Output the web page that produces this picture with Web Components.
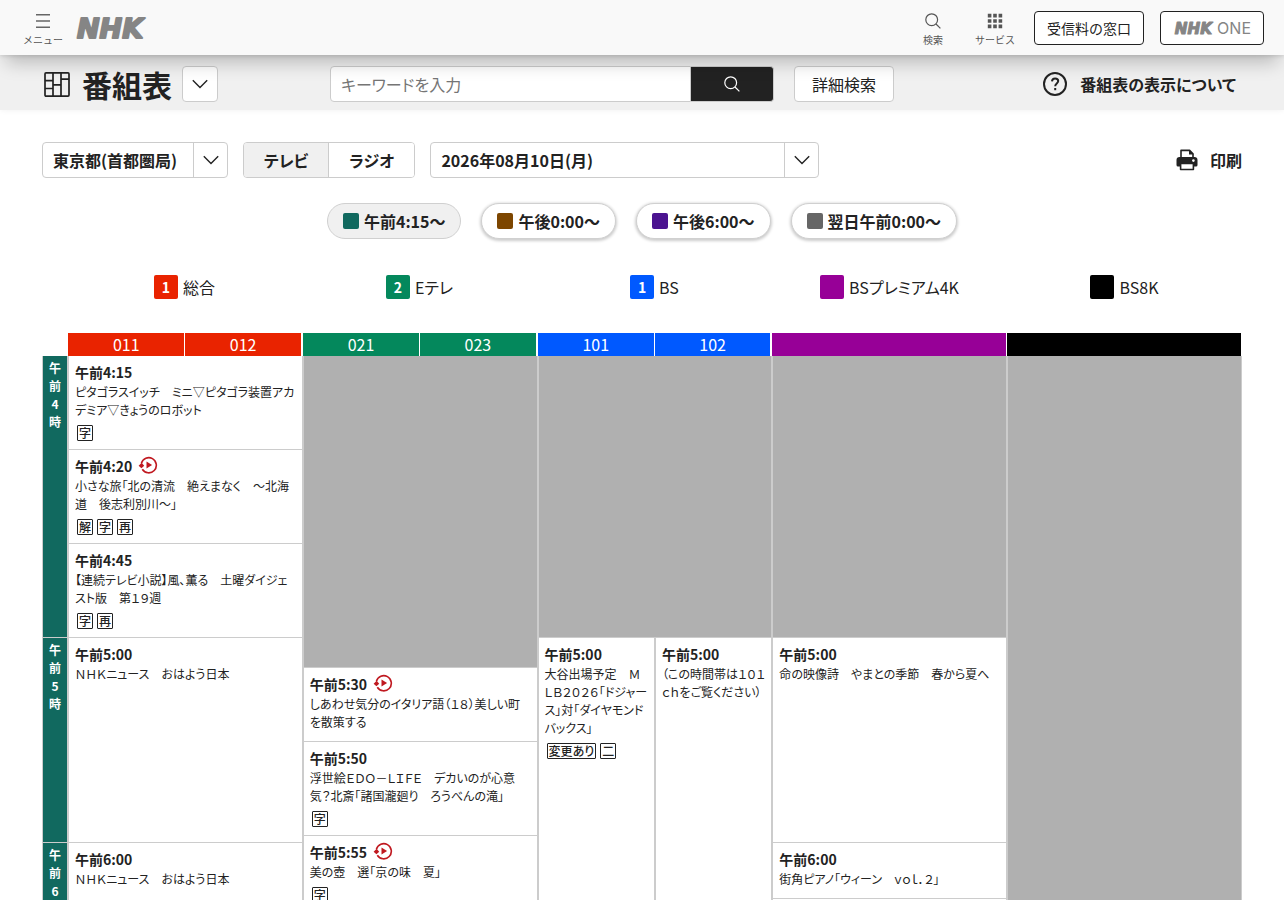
<!DOCTYPE html>
<html lang="ja">
<head>
<meta charset="utf-8">
<meta name="viewport" content="width=device-width, initial-scale=1">
<title>番組表</title>
<style>
    body {
        margin: 0;
        background: #fff;
        color: #222;
        font-family: "Noto Sans CJK JP", "Noto Sans", sans-serif;
        font-size: 16px;
        line-height: 24px;
        font-feature-settings: "palt";
    }

    main {
        max-width: 1200px;
        margin: 0 auto;
        padding: 32px 42px 0;
    }
</style>
</head>
<body>
<site-header></site-header>
<title-bar heading="番組表"></title-bar>
<main>
    <filter-bar></filter-bar>
    <time-jump>
        <time-pill color="#11695f" current>午前4:15～</time-pill>
        <time-pill color="#7d4600">午後0:00～</time-pill>
        <time-pill color="#4b1390">午後6:00～</time-pill>
        <time-pill color="#666666">翌日午前0:00～</time-pill>
    </time-jump>
    <channel-legend>
        <channel-name color="#e92300" number="1">総合</channel-name>
        <channel-name color="#04885c" number="2">Eテレ</channel-name>
        <channel-name color="#0059ff" number="1">BS</channel-name>
        <channel-name color="#970097">BSプレミアム4K</channel-name>
        <channel-name color="#000000">BS8K</channel-name>
    </channel-legend>
    <program-table></program-table>
</main>

<script>
const baseStyle = `
    *, *::before, *::after { box-sizing: border-box; }
    button, input, select {
        margin: 0;
        font: inherit;
        font-feature-settings: inherit;
        color: inherit;
    }
    button { cursor: pointer; }
    a { color: inherit; text-decoration: none; }
    svg { display: block; flex: none; }
`;

const icons = {
    menu: `<svg width="16" height="16" viewBox="0 0 16 16" fill="none" stroke="#666" stroke-width="1.4"><path d="M1 1.8h14M1 8h14M1 14.2h14"/></svg>`,
    search: `<svg width="16" height="16" viewBox="0 0 16 16" fill="none" stroke="currentColor" stroke-width="1.2"><circle cx="6.7" cy="6.7" r="5.9"/><path d="M11 11l4.4 4.4"/></svg>`,
    dots: `<svg width="16" height="16" viewBox="0 0 16 16" fill="#555"><path d="M.8.8h3.6v3.6H.8zM6.2.8h3.6v3.6H6.2zM11.6.8h3.6v3.6h-3.6zM.8 6.2h3.6v3.6H.8zM6.2 6.2h3.6v3.6H6.2zM11.6 6.2h3.6v3.6h-3.6zM.8 11.6h3.6v3.6H.8zM6.2 11.6h3.6v3.6H6.2zM11.6 11.6h3.6v3.6h-3.6z"/></svg>`,
    chevron: `<svg width="16" height="10" viewBox="0 0 16 10" fill="none" stroke="#222" stroke-width="1.4"><path d="M.8 1.2L8 8.4l7.2-7.2"/></svg>`,
    guide: `<svg width="26" height="26" viewBox="0 0 26 26" fill="none" stroke="#222" stroke-width="1.7"><rect x="1" y="1.9" width="24" height="23.2" rx="1"/><path d="M9 1.9v23.2M17 1.9v23.2M1 9.7h8M1 17.5h8M9 13.9h8M17 8.1h8"/></svg>`,
    help: `<svg width="26" height="26" viewBox="0 0 26 26" fill="none" stroke="#222" stroke-width="2"><circle cx="13" cy="13" r="11"/><path d="M10 10.4c.1-1.9 1.400-3 3.100-3s3.100 1 3.100 2.700c0 2.400-3 2.500-3 5.200"/><path d="M13.200 17v2.200"/></svg>`,
    print: `<svg width="22" height="22" viewBox="0 0 22 22"><path d="M5 8.500V1.400h8.600L17 4.800v3.700" fill="#fff" stroke="#222" stroke-width="1.600" stroke-linejoin="round"/><path d="M13 1v4.600h4.600z" fill="#222"/><path d="M3.600 8h14.800A3.100 3.100 0 0 1 21.500 11.100V16a1.500 1.500 0 0 1-1.500 1.500H2A1.500 1.500 0 0 1 .5 16V11.100A3.100 3.100 0 0 1 3.600 8z" fill="#222"/><path d="M4.600 14.500h12.800v6H4.600z" fill="#fff" stroke="#222" stroke-width="1.600" stroke-linejoin="round"/><circle cx="17.400" cy="11.600" r="1.300" fill="#fff"/></svg>`,
    replay: `<svg width="20" height="18" viewBox="0 0 20 18" fill="none" stroke="#c01920" stroke-width="1.600"><path d="M3.400 7.200A7.600 7.600 0 1 1 4.300 13.300"/><path d="M.6 9.800l3-3 2.600 3-2.800 2.400z" fill="#c01920" stroke="none"/><path d="M8.500 5.600v6.800l5.600-3.400z" fill="#c01920" stroke="none"/></svg>`
};

function render(element, css, html) {
    if (element.shadowRoot) {
        return;
    }
    const template = document.createElement('template');
    template.innerHTML = `<style>${baseStyle}${css}</style>${html}`;
    element.attachShadow({ mode: 'open' }).appendChild(template.content.cloneNode(true));
}

class NhkLogo extends HTMLElement {
    connectedCallback() {
        const small = this.hasAttribute('small');
        render(this, `
            :host { display: block; }
            svg { overflow: visible; }
            text {
                font: italic bold 27px "DejaVu Sans", sans-serif;
                fill: #858585;
                stroke: #858585;
                stroke-width: 2px;
                stroke-linejoin: round;
            }
        `, `
            <svg width="${small ? 41 : 72}" height="${small ? 18 : 32}" viewBox="0 0 72 32" role="img" aria-label="NHK">
                <text x="1" y="26">NHK</text>
            </svg>
        `);
    }
}

class SiteHeader extends HTMLElement {
    connectedCallback() {
        render(this, `
            :host {
                display: block;
                position: relative;
                z-index: 1;
                background: #f9f9f9;
                box-shadow: 0 14px 18px -6px rgba(0, 0, 0, 0.22), 0 1px 4px rgba(0, 0, 0, 0.12);
                font-feature-settings: normal;
            }
            header {
                display: flex;
                align-items: center;
                height: 55px;
                padding: 0 20px;
            }
            .tool {
                display: flex;
                flex-direction: column;
                align-items: center;
                gap: 3px;
                width: 46px;
                padding: 5px 0 0;
                border: 0;
                background: none;
                color: #555;
                font-size: 10px;
                line-height: 16px;
            }
            .home { margin-left: 10px; }
            nav {
                display: flex;
                align-items: center;
                gap: 16px;
                margin-left: auto;
            }
            .link {
                display: flex;
                align-items: center;
                justify-content: center;
                gap: 2px;
                height: 34px;
                padding: 0 12px;
                border: 1px solid #222;
                border-radius: 4px;
                background: #fff;
                font-size: 14px;
            }
            .one { padding: 0 12px 0 13px; }
            .one span {
                font-family: Inter, sans-serif;
                font-size: 16px;
                color: #858585;
            }
        `, `
            <header>
                <button class="tool" type="button">${icons.menu}メニュー</button>
                <a class="home" href="#"><nhk-logo></nhk-logo></a>
                <nav>
                    <button class="tool" type="button">${icons.search}検索</button>
                    <button class="tool" type="button">${icons.dots}サービス</button>
                    <a class="link" href="#">受信料の窓口</a>
                    <a class="link one" href="#"><nhk-logo small></nhk-logo><span>ONE</span></a>
                </nav>
            </header>
        `);
    }
}

class TitleBar extends HTMLElement {
    connectedCallback() {
        render(this, `
            :host {
                display: block;
                background: #f0f0f0;
                box-shadow: 0 0 6px #f0f0f0;
            }
            .inner {
                display: flex;
                align-items: center;
                max-width: 1284px;
                margin: 0 auto;
                padding: 11px 48px 8px 44px;
            }
            h1 {
                margin: 0 10px 0 12px;
                font-size: 30px;
                line-height: 36px;
            }
            .box {
                display: flex;
                align-items: center;
                justify-content: center;
                height: 36px;
                border: 1px solid #ccc;
                border-radius: 4px;
                background: #fff;
            }
            .arrow { width: 36px; padding: 0; }
            form {
                display: flex;
                flex: 0 1 444px;
                margin-left: 112px;
            }
            input {
                flex: 1;
                min-width: 0;
                height: 36px;
                padding: 0 10px;
                border: 1px solid #ccc;
                border-radius: 4px 0 0 4px;
                background: #fff;
            }
            input::placeholder { color: #757575; opacity: 1; }
            .go {
                display: flex;
                align-items: center;
                justify-content: center;
                width: 83px;
                padding: 0;
                border: 1px solid #ccc;
                border-left: 0;
                border-radius: 0 4px 4px 0;
                background: #222;
                color: #fff;
            }
            .detail { margin-left: 20px; padding: 0 17px; }
            .help {
                display: flex;
                align-items: center;
                gap: 12px;
                margin-left: auto;
                font-weight: bold;
            }
        `, `
            <div class="inner">
                ${icons.guide}
                <h1>${this.getAttribute('heading')}</h1>
                <button class="box arrow" type="button" aria-label="メニューを開く">${icons.chevron}</button>
                <form role="search">
                    <input type="text" placeholder="キーワードを入力" aria-label="キーワード">
                    <button class="go" type="button" aria-label="検索">${icons.search}</button>
                </form>
                <a class="box detail" href="#">詳細検索</a>
                <a class="help" href="#">${icons.help}番組表の表示について</a>
            </div>
        `);
    }
}

class DropDown extends HTMLElement {
    connectedCallback() {
        render(this, `
            :host { display: block; }
            label {
                display: grid;
                grid-template-columns: 1fr 34px;
                align-items: center;
                height: 36px;
                border: 1px solid #ccc;
                border-radius: 4px;
                background: #fff;
            }
            select {
                grid-area: 1 / 1 / 2 / 3;
                width: 100%;
                height: 34px;
                padding: 0 50px 0 10px;
                border: 0;
                background: none;
                appearance: none;
                font-weight: bold;
            }
            span {
                grid-area: 1 / 2;
                display: grid;
                place-items: center;
                height: 34px;
                border-left: 1px solid #ccc;
                pointer-events: none;
            }
        `, `
            <label>
                <select aria-label="${this.getAttribute('label')}"><option>${this.getAttribute('value')}</option></select>
                <span>${icons.chevron}</span>
            </label>
        `);
    }
}

class FilterBar extends HTMLElement {
    connectedCallback() {
        render(this, `
            :host {
                display: flex;
                align-items: center;
                gap: 15px;
            }
            .area { flex: 0 1 186px; }
            .date { flex: 0 1 389px; }
            .media {
                display: flex;
                flex: none;
                height: 36px;
                border: 1px solid #ccc;
                border-radius: 4px;
                overflow: hidden;
            }
            .media button {
                padding: 0 20px;
                border: 0;
                background: #fff;
                font-weight: bold;
            }
            .media button + button { border-left: 1px solid #ccc; }
            .media [aria-pressed="true"] { background: #f0f0f0; }
            .print {
                display: flex;
                align-items: center;
                gap: 12px;
                margin-left: auto;
                padding: 0;
                border: 0;
                background: none;
                font-weight: bold;
            }
        `, `
            <drop-down class="area" label="地域" value="東京都(首都圏局)"></drop-down>
            <div class="media">
                <button type="button" aria-pressed="true">テレビ</button>
                <button type="button" aria-pressed="false">ラジオ</button>
            </div>
            <drop-down class="date" label="日付" value="2026年08月10日(月)"></drop-down>
            <button class="print" type="button">${icons.print}印刷</button>
        `);
    }
}

class TimeJump extends HTMLElement {
    connectedCallback() {
        render(this, `
            :host {
                display: flex;
                flex-wrap: wrap;
                justify-content: center;
                gap: 20px;
                margin-top: 25px;
            }
        `, `<slot></slot>`);
    }
}

class TimePill extends HTMLElement {
    connectedCallback() {
        render(this, `
            :host { display: block; }
            button {
                display: flex;
                align-items: center;
                gap: 5px;
                height: 36px;
                padding: 0 15px;
                border: 1px solid #d0d0d0;
                border-radius: 18px;
                background: #fff;
                box-shadow: 0 1px 3px 1px rgba(0, 0, 0, 0.2);
                font-weight: bold;
            }
            :host([current]) button { background: #f0f0f0; box-shadow: none; }
            i {
                width: 16px;
                height: 16px;
                border-radius: 2px;
                background: ${this.getAttribute('color')};
            }
        `, `<button type="button"><i></i><slot></slot></button>`);
    }
}

class ChannelLegend extends HTMLElement {
    connectedCallback() {
        render(this, `
            :host {
                display: grid;
                grid-template-columns: repeat(5, 1fr);
                margin: 36px 0 34px;
                padding-left: 25px;
            }
        `, `<slot></slot>`);
    }
}

class ChannelName extends HTMLElement {
    connectedCallback() {
        render(this, `
            :host {
                display: flex;
                align-items: center;
                justify-content: center;
                gap: 5px;
            }
            b {
                width: 24px;
                height: 24px;
                border-radius: 2px;
                background: ${this.getAttribute('color')};
                color: #fff;
                font-size: 14px;
                text-align: center;
            }
        `, `<b>${this.getAttribute('number') || ''}</b><slot></slot>`);
    }
}

class ProgramItem extends HTMLElement {
    connectedCallback() {
        const marks = (this.getAttribute('marks') || '').split(' ').filter(Boolean);
        render(this, `
            :host {
                display: block;
                padding: 6px 6px 8px;
                font-size: 12px;
                line-height: 18px;
            }
            .time {
                display: flex;
                align-items: flex-start;
                gap: 6px;
                height: 21px;
                font-size: 14px;
                line-height: 21px;
                font-weight: bold;
            }
            .marks {
                display: flex;
                flex-wrap: wrap;
                gap: 4px;
                padding: 6px 2px 0;
            }
            .marks span {
                height: 16px;
                padding: 0 1px;
                border: 1px solid #222;
                border-radius: 1px;
                line-height: 14px;
                font-weight: 500;
            }
        `, `
            <div class="time">${this.getAttribute('time')}${this.hasAttribute('replay') ? icons.replay : ''}</div>
            <a href="#"><slot></slot></a>
            ${marks.length ? `<div class="marks">${marks.map(m => `<span>${m}</span>`).join('')}</div>` : ''}
        `);
    }
}

const channels = [
    { no: '011', color: '#e92300' },
    { no: '012', color: '#e92300', last: true },
    { no: '021', color: '#04885c' },
    { no: '023', color: '#04885c', last: true },
    { no: '101', color: '#0059ff' },
    { no: '102', color: '#0059ff', last: true },
    { no: '', color: '#970097', wide: true },
    { no: '', color: '#000000', wide: true }
];

// one entry per table row: height in px, then the cells that start on it
const rows = [
    { height: 94, cells: [
        { hour: '午前4時', rows: 3 },
        { time: '午前4:15', title: 'ピタゴラスイッチ　ミニ▽ピタゴラ装置アカデミア▽きょうのロボット', marks: '字' },
        { off: true, rows: 4 },
        { off: true, rows: 3 },
        { off: true, rows: 3 },
        { off: true, rows: 9 }
    ] },
    { height: 94, cells: [
        { time: '午前4:20', replay: true, title: '小さな旅「北の清流　絶えまなく　～北海道　後志利別川～」', marks: '解 字 再' }
    ] },
    { height: 94, cells: [
        { time: '午前4:45', title: '【連続テレビ小説】風、薫る　土曜ダイジェスト版　第１９週', marks: '字 再' }
    ] },
    { height: 30, cells: [
        { hour: '午前5時', rows: 4 },
        { time: '午前5:00', title: 'ＮＨＫニュース　おはよう日本', rows: 4 },
        { time: '午前5:00', title: '大谷出場予定　ＭＬＢ２０２６「ドジャース」対「ダイヤモンドバックス」', marks: '変更あり 二', rows: 6, half: true },
        { time: '午前5:00', title: '（この時間帯は１０１ｃｈをご覧ください）', rows: 6, half: true },
        { time: '午前5:00', title: '命の映像詩　やまとの季節　春から夏へ', rows: 4 }
    ] },
    { height: 74, cells: [
        { time: '午前5:30', replay: true, title: 'しあわせ気分のイタリア語（１８）美しい町を散策する' }
    ] },
    { height: 94, cells: [
        { time: '午前5:50', title: '浮世絵ＥＤＯ－ＬＩＦＥ　デカいのが心意気？北斎「諸国瀧廻り　ろうべんの滝」', marks: '字' }
    ] },
    { height: 7, cells: [
        { time: '午前5:55', replay: true, title: '美の壺　選「京の味　夏」', marks: '字', rows: 3 }
    ] },
    { height: 56, cells: [
        { hour: '午前6時', rows: 2 },
        { time: '午前6:00', title: 'ＮＨＫニュース　おはよう日本', rows: 2 },
        { time: '午前6:00', title: '街角ピアノ「ウィーン　ｖｏｌ．２」' }
    ] },
    { height: 40, cells: [{}] }
];

class ProgramTable extends HTMLElement {
    cell(c) {
        const span = `rowspan="${c.rows || 1}"`;
        if (c.hour) {
            return `<th class="hour" scope="row" ${span}>${c.hour}</th>`;
        }
        const item = c.time
            ? `<program-item time="${c.time}" marks="${c.marks || ''}" ${c.replay ? 'replay' : ''}>${c.title}</program-item>`
            : '';
        return `<td ${span} colspan="${c.half ? 1 : 2}" class="${c.off ? 'off' : ''}">${item}</td>`;
    }

    connectedCallback() {
        const head = channels.map(c =>
            `<th scope="col" class="${c.last ? 'last' : ''}" colspan="${c.wide ? 2 : 1}" style="background-color: ${c.color}">${c.no}</th>`
        ).join('');
        const body = rows.map(r =>
            `<tr style="height: ${r.height}px">${r.cells.map(c => this.cell(c)).join('')}</tr>`
        ).join('');

        render(this, `
            :host { display: block; }
            table {
                width: 100%;
                table-layout: fixed;
                border-collapse: separate;
                border-spacing: 0;
            }
            .hours { width: 26px; }
            th, td { padding: 0; vertical-align: top; }
            thead th {
                height: 23px;
                border-right: 1px solid #fff;
                background-clip: padding-box;
                color: #fff;
                font-weight: normal;
                line-height: 23px;
            }
            thead .last { border-right-width: 2px; }
            tbody th, tbody td {
                border: 1px solid #ccc;
                border-top: 0;
            }
            .off { background: #b0b0b0; }
            .hour {
                padding: 3px 6px;
                background: #11695f;
                color: #fff;
                font-size: 12px;
                line-height: 18px;
                word-break: break-all;
            }
        `, `
            <table>
                <colgroup><col class="hours"><col span="10"></colgroup>
                <thead><tr><td></td>${head}</tr></thead>
                <tbody>${body}</tbody>
            </table>
        `);
    }
}

customElements.define('nhk-logo', NhkLogo);
customElements.define('site-header', SiteHeader);
customElements.define('title-bar', TitleBar);
customElements.define('drop-down', DropDown);
customElements.define('filter-bar', FilterBar);
customElements.define('time-jump', TimeJump);
customElements.define('time-pill', TimePill);
customElements.define('channel-legend', ChannelLegend);
customElements.define('channel-name', ChannelName);
customElements.define('program-item', ProgramItem);
customElements.define('program-table', ProgramTable);
</script>
</body>
</html>
